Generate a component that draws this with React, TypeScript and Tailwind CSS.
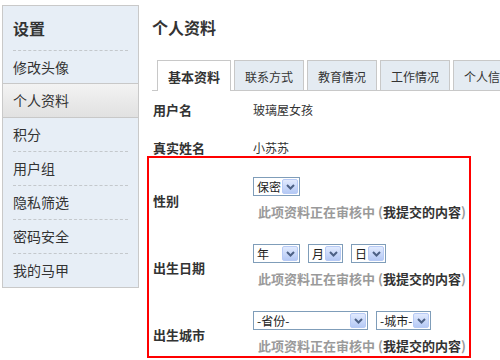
const font = { fontFamily: '"Noto Sans CJK SC", "Liberation Sans", sans-serif' };

const menu = ["修改头像", "个人资料", "积分", "用户组", "隐私筛选", "密码安全", "我的马甲"];
const tabs = ["基本资料", "联系方式", "教育情况", "工作情况", "个人信息"];

function Chevron() {
    return (
        <svg width="9" height="6" viewBox="0 0 9 6">
            <polyline points="1,1 4.5,4.5 8,1" fill="none" stroke="#4d6185" strokeWidth="2"/>
        </svg>
    );
}

function Select({value, w}: { value: string; w: string }) {
    return (
        <div className={`${w} flex h-[19px] items-center justify-between border border-[#7f9db9] bg-white pl-[3px] pr-px text-[12px] leading-none text-[#222]`}>
            <span className="whitespace-pre">{value}</span>
            <span className="flex h-[15px] w-[16px] items-center justify-center rounded-[2px] border border-[#b7caf5] bg-gradient-to-b from-[#e1eafe] to-[#b5c9f5]">
                <Chevron/>
            </span>
        </div>
    );
}

function Note() {
    return (
        <p className="mt-[8px] ml-[5px] h-[16px] whitespace-nowrap text-[13px] font-bold leading-[16px] text-[#9a9a9a]">
            此项资料正在审核中 (<span className="text-[#333]">我提交的内容</span>)
        </p>
    );
}

function Group({label, children, last}: { label: string; children: React.ReactNode; last?: boolean }) {
    return (
        <div className={`flex ${last ? "pb-[2px]" : "pb-[24px]"}`}>
            <div className="mt-[16px] w-[100px] text-[13px] font-bold leading-[16px] text-[#333]">{label}</div>
            <div>
                <div className="flex gap-[8px]">{children}</div>
                <Note/>
            </div>
        </div>
    );
}

export default function App() {
    return (
        <div style={font} className="flex h-[360px] w-[500px] overflow-hidden bg-white text-[#333]">
            <aside className="mt-[5px] ml-[2px] w-[137px] self-start border border-[#c9c9c9] bg-[#e7eef6]">
                <div className="mx-[10px] flex h-[45px] items-center border-b border-dashed border-[#c4c8cc] text-[16px] font-bold">
                    设置
                </div>
                {menu.map((item, i) => {
                    const selected = i === 1;
                    let cls = "mx-[10px] h-[34px] border-b border-dashed border-[#c4c8cc]";
                    if (selected) cls = "h-[35px] border-y border-[#c8c8c8] bg-gradient-to-b from-[#f3f3f3] to-[#e1e1e1] px-[10px]";
                    else if (i === 0) cls = "mx-[10px] h-[32px]";
                    else if (i === menu.length - 1) cls = "mx-[10px] h-[33px]";
                    return (
                        <div key={item} className={`flex items-center text-[14px] text-[#333] ${cls}`}>
                            {item}
                        </div>
                    );
                })}
            </aside>

            <main className="ml-[8px] flex min-w-0 flex-1 flex-col overflow-hidden">
                <h1 className="flex h-[54px] items-center pl-[5px] text-[16px] font-bold text-[#333]">个人资料</h1>

                <div className="mt-[6px] ml-[5px] flex h-[31px] gap-[3px] border-b border-[#c8c8c8] pl-[5px]">
                    {tabs.map((t, i) => (
                        <div
                            key={t}
                            className={
                                i === 0
                                    ? "-mb-px flex h-[31px] w-[74px] shrink-0 items-center justify-center border border-b-0 border-[#c8c8c8] bg-white pt-[2px] text-[13px] font-bold"
                                    : "flex h-[30px] w-[70px] shrink-0 items-center justify-center whitespace-nowrap border border-b-0 border-[#c8c8c8] bg-[#e4ebf2] pt-[2px] text-[12px]"
                            }
                        >
                            {t}
                        </div>
                    ))}
                </div>

                <div className="pl-[6px]">
                    <div className="flex h-[38px] items-center text-[12px]">
                        <span className="w-[100px] text-[13px] font-bold">用户名</span>
                        <span>玻璃屋女孩</span>
                    </div>
                    <div className="flex h-[27px] items-start pt-[11px] text-[12px] leading-[16px]">
                        <span className="w-[100px] text-[13px] font-bold">真实姓名</span>
                        <span>小苏苏</span>
                    </div>
                </div>

                <div className="w-[324px] border-2 border-[#ff0000] pt-[19px] pl-[4px]">
                    <Group label="性别">
                        <Select value="保密" w="w-[47px]"/>
                    </Group>
                    <Group label="出生日期">
                        <Select value="年" w="w-[47px]"/>
                        <Select value="月" w="w-[35px]"/>
                        <Select value="日" w="w-[35px]"/>
                    </Group>
                    <Group label="出生城市" last>
                        <Select value="-省份-" w="w-[115px]"/>
                        <Select value="-城市-" w="w-[55px]"/>
                    </Group>
                </div>
            </main>
        </div>
    );
}
